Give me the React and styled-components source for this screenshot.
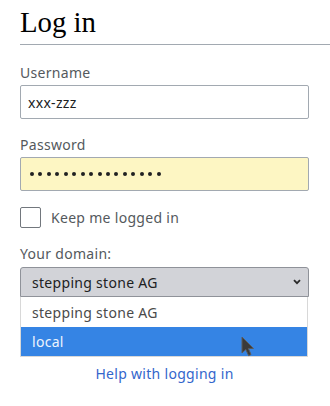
import React from "react";
import styled, { createGlobalStyle } from "styled-components";

const Global = createGlobalStyle`
  html, body { margin: 0; padding: 0; background: #fff; }
  body { font-family: "Noto Sans", "Open Sans", sans-serif; letter-spacing: 0.3px; }
  * { box-sizing: border-box; }
`;

const Page = styled.div`
  width: 330px;
  padding: 0 0 0 20px;
`;

const Heading = styled.h1`
  margin: 0;
  padding: 3px 0 3px;
  font-family: "Liberation Serif", "Times New Roman", serif;
  font-weight: normal;
  font-size: 28.8px;
  line-height: 38px;
  letter-spacing: 0;
  color: #000;
  border-bottom: 1px solid #a2a9b1;
`;

const Form = styled.form`
  width: 289px;
  display: flex;
  flex-direction: column;
`;

const Field = styled.div`
  display: flex;
  flex-direction: column;
  margin-top: ${(p) => p.$top}px;
`;

const Label = styled.label`
  font-size: 14px;
  line-height: 20px;
  color: #54595d;
`;

const TextInput = styled.input`
  margin-top: 2px;
  height: 34px;
  width: 100%;
  padding: 0 7px;
  border: 1px solid #a2a9b1;
  border-radius: 2px;
  background: #fff;
  font-family: "Noto Sans", sans-serif;
  font-size: 14px;
  letter-spacing: 0.3px;
  color: #202122;
  outline: none;
`;

const Dots = styled.div`
  margin-top: 2px;
  height: 34px;
  display: flex;
  align-items: center;
  gap: 4.45px;
  padding: 0 0 0 9px;
  border: 1px solid #a2a9b1;
  border-radius: 2px;
  background: #fdf6c3;
`;

const Dot = styled.span`
  width: 4px;
  height: 4px;
  border-radius: 50%;
  background: #202122;
`;

const CheckRow = styled.label`
  margin-top: 16px;
  display: flex;
  align-items: center;
  gap: 10px;
  font-size: 14px;
  line-height: 20px;
  color: #54595d;
`;

const Box = styled.span`
  width: 21px;
  height: 21px;
  border: 1px solid #72777d;
  border-radius: 2px;
  background: #fff;
`;

const SelectWrap = styled.div`
  position: relative;
  margin-top: 3px;
`;

const Trigger = styled.div`
  height: 30px;
  display: flex;
  align-items: center;
  justify-content: space-between;
  padding: 0 7px 0 11px;
  border: 1px solid #8f9299;
  border-radius: 3px 3px 0 0;
  background: #d2d3d8;
  font-size: 14px;
  color: #202122;
`;

const List = styled.ul`
  position: absolute;
  top: 100%;
  left: 0;
  right: 1px;
  margin: 0;
  padding: 0;
  list-style: none;
  border: 1px solid #d8d8d8;
  border-top: none;
  background: #fff;
`;

const Option = styled.li`
  height: ${(p) => p.$h}px;
  display: flex;
  align-items: center;
  padding-left: 11px;
  font-size: 14px;
  color: ${(p) => (p.$active ? "#eef4fd" : "#4a4a4a")};
  background: ${(p) => (p.$active ? "#3584e4" : "#fff")};
`;

const Cursor = styled.svg`
  position: absolute;
  left: 219px;
  top: 39px;
`;

const Help = styled.a`
  margin-top: 67px;
  text-align: center;
  font-size: 14px;
  line-height: 20px;
  color: #3366cc;
  text-decoration: none;
`;

export default function App() {
  return (
    <Page>
      <Global />
      <Heading>Log in</Heading>
      <Form onSubmit={(e) => e.preventDefault()}>
        <Field $top={18}>
          <Label>Username</Label>
          <TextInput defaultValue="xxx-zzz" readOnly />
        </Field>
        <Field $top={16}>
          <Label>Password</Label>
          <Dots aria-label="password">
            {Array.from({ length: 16 }).map((_, i) => (
              <Dot key={i} />
            ))}
          </Dots>
        </Field>
        <CheckRow>
          <Box />
          Keep me logged in
        </CheckRow>
        <Field $top={16}>
          <Label>Your domain:</Label>
          <SelectWrap>
            <Trigger>
              <span>stepping stone AG</span>
              <svg width="8" height="6" viewBox="0 0 8 6">
                <path d="M1 1.2 L4 4.2 L7 1.2" fill="none" stroke="#2a2a2a" strokeWidth="1.8" />
              </svg>
            </Trigger>
            <List>
              <Option $h={30}>stepping stone AG</Option>
              <Option $h={29} $active>local</Option>
              <Cursor width="16" height="22" viewBox="0 0 16 22">
                <path
                  d="M2 1 V17 L5.8 13.4 L8.6 19.6 L11 18.5 L8.3 12.4 H13.4 Z"
                  fill="#3a3a3a"
                  stroke="#5a5a5a"
                  strokeWidth="1"
                  strokeLinejoin="round"
                />
              </Cursor>
            </List>
          </SelectWrap>
        </Field>
        <Help href="#">Help with logging in</Help>
      </Form>
    </Page>
  );
}
